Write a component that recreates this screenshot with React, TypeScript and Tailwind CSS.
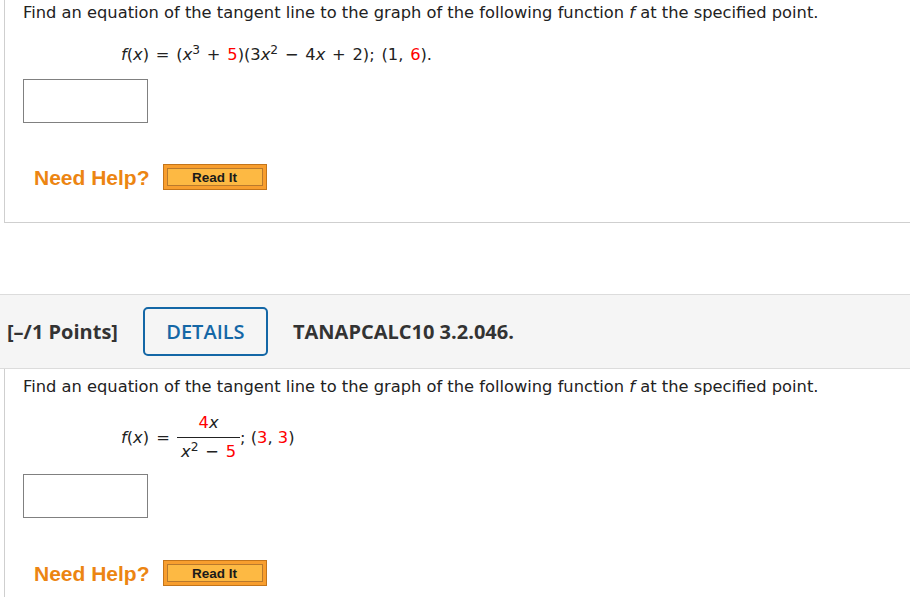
import React from 'react';

// WebAssign-style question panel with two tangent-line problems

const Red = ({ children }: { children: React.ReactNode }) => (
  <span className="text-[#ff0000]">{children}</span>
);

const I = ({ children }: { children: React.ReactNode }) => (
  <span className="italic [font-synthesis:style]">{children}</span>
);

const HelpRow = () => (
  <div className="ml-[11px] flex h-[26px] items-center gap-[13px]">
    <span className="font-['Liberation_Sans',Arial,sans-serif] text-[21px] font-bold leading-none text-[#ec8512]">
      Need Help?
    </span>
    <button className="h-[26px] w-[104px] border border-[#c4751a] bg-[#f89e2e] p-[3px]">
      <div className="flex h-full w-full items-center justify-center border border-[#b9792d] bg-[#fdb943] pt-[1px] font-['Liberation_Sans',Arial,sans-serif] text-[13.5px] font-bold leading-none text-[#1a1a1a]">
        Read It
      </div>
    </button>
  </div>
);

const AnswerBox = () => (
  <div className="h-[44px] w-[125px] border border-[#808080] bg-white" />
);

const Prompt = () => (
  <p className="text-[16.3px] leading-[20px]">
    Find an equation of the tangent line to the graph of the following function <I>f</I> at the specified
    point.
  </p>
);

export default function App() {
  return (
    <div className="h-[597px] w-[910px] overflow-hidden bg-white font-['DejaVu_Sans',Verdana,sans-serif] text-[#222]">
      {/* first question body */}
      <div className="ml-[4px] h-[223px] border-b border-l border-[#cfcfcf] pl-[18px] pt-[3px]">
        <Prompt />
        <div className="ml-[98px] mt-[22px] text-[16.3px] leading-[20px] [word-spacing:1.6px]">
          <I>f</I>(<I>x</I>) = (<I>x</I>
          <sup>3</sup> + <Red>5</Red>)(3<I>x</I>
          <sup>2</sup> − 4<I>x</I> + 2); (1, <Red>6</Red>).
        </div>
        <div className="mt-[14px]">
          <AnswerBox />
        </div>
        <div className="mt-[41px]">
          <HelpRow />
        </div>
      </div>

      {/* header of second question */}
      <div className="mt-[71px] flex h-[75px] items-center border-y border-[#dcdcdc] bg-[#f5f5f5] font-['Open_Sans',sans-serif] text-[20px] text-[#333]">
        <span className="ml-[7px] font-bold">[–/1 Points]</span>
        <div className="ml-[25px] flex h-[49px] w-[125px] items-center justify-center rounded-[5px] border-2 border-[#1467a6] font-semibold text-[#1467a6]">
          DETAILS
        </div>
        <span className="ml-[25px] font-bold">TANAPCALC10 3.2.046.</span>
      </div>

      {/* second question body */}
      <div className="ml-[4px] h-[300px] border-l border-[#cfcfcf] pl-[18px] pt-[8px]">
        <Prompt />
        <div className="ml-[98px] mt-[16px] flex items-center text-[16.3px] leading-[20px]">
          <span className="whitespace-pre [word-spacing:2px]">
            <I>f</I>(<I>x</I>) ={' '}
          </span>
          <div className="flex w-[63px] flex-col items-center">
            <div className="w-full border-b border-[#222] pb-[4px] text-center">
              <Red>4</Red>
              <I>x</I>
            </div>
            <div className="pt-[4px] text-center [word-spacing:1.6px]">
              <I>x</I>
              <sup>2</sup> − <Red>5</Red>
            </div>
          </div>
          <span className="whitespace-pre">
            ; (<Red>3</Red>, <Red>3</Red>)
          </span>
        </div>
        <div className="mt-[12px]">
          <AnswerBox />
        </div>
        <div className="mt-[42px]">
          <HelpRow />
        </div>
      </div>
    </div>
  );
}
